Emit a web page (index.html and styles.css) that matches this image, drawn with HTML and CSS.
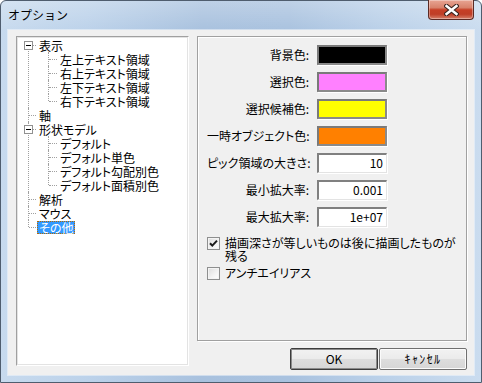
FILE: index.html
```html
<!DOCTYPE html>
<html lang="ja">
<head>
<meta charset="utf-8">
<title>オプション</title>
<link rel="stylesheet" href="styles.css">
</head>
<body>
<div class="window">
  <div class="titlebar">
    <span class="title">オプション</span>
    <div class="close">
      <svg width="15" height="12" viewBox="0 0 15 12"><path d="M2.5 2 L12.5 10 M12.5 2 L2.5 10" stroke="#3a2420" stroke-width="4.6" stroke-linecap="square" fill="none"/><path d="M2.5 2 L12.5 10 M12.5 2 L2.5 10" stroke="#fff" stroke-width="2.4" stroke-linecap="square" fill="none"/></svg>
    </div>
  </div>
  <div class="client">
    <div class="tree">
      <ul class="lvl0">
        <li><div class="node"><span class="exp"></span><span class="lbl">表示</span></div>
          <ul class="lvl1">
            <li><div class="node"><span class="lbl">左上テキスト領域</span></div></li>
            <li><div class="node"><span class="lbl">右上テキスト領域</span></div></li>
            <li><div class="node"><span class="lbl">左下テキスト領域</span></div></li>
            <li><div class="node"><span class="lbl">右下テキスト領域</span></div></li>
          </ul>
        </li>
        <li><div class="node"><span class="lbl">軸</span></div></li>
        <li><div class="node"><span class="exp"></span><span class="lbl">形状モデル</span></div>
          <ul class="lvl1">
            <li><div class="node"><span class="lbl">デフォルト</span></div></li>
            <li><div class="node"><span class="lbl">デフォルト単色</span></div></li>
            <li><div class="node"><span class="lbl">デフォルト勾配別色</span></div></li>
            <li><div class="node"><span class="lbl">デフォルト面積別色</span></div></li>
          </ul>
        </li>
        <li><div class="node"><span class="lbl">解析</span></div></li>
        <li><div class="node"><span class="lbl">マウス</span></div></li>
        <li><div class="node"><span class="lbl selected">その他</span></div></li>
      </ul>
    </div>
    <div class="right">
      <div class="panel">
        <div class="form">
          <span class="label">背景色:</span><span class="swatch black"></span>
          <span class="label">選択色:</span><span class="swatch pink"></span>
          <span class="label">選択候補色:</span><span class="swatch yellow"></span>
          <span class="label">一時オブジェクト色:</span><span class="swatch orange"></span>
          <span class="label">ピック領域の大きさ:</span><span class="field">10</span>
          <span class="label">最小拡大率:</span><span class="field">0.001</span>
          <span class="label">最大拡大率:</span><span class="field">1e+07</span>
        </div>
        <div class="check first">
          <span class="box"><svg width="11" height="11" viewBox="0 0 11 11"><path d="M2 5.2 L4.3 7.6 L9 2.6" stroke="#1c1c1c" stroke-width="2" fill="none"/></svg></span>
          <span class="ctext">描画深さが等しいものは後に描画したものが<br>残る</span>
        </div>
        <div class="check">
          <span class="box"></span>
          <span class="ctext">アンチエイリアス</span>
        </div>
      </div>
      <div class="buttons">
        <span class="btn default">OK</span>
        <span class="btn cancel">ｷｬﾝｾﾙ</span>
      </div>
    </div>
  </div>
</div>
</body>
</html>
```
FILE: styles.css
```css
html, body {
  margin: 0;
  padding: 0;
  background: #ffffff;
}
body {
  font-family: "Noto Sans CJK JP", "Liberation Sans", sans-serif;
  font-size: 12px;
  color: #000;
}
.window {
  box-sizing: border-box;
  width: 482px;
  height: 383px;
  border: 1px solid #4f5d6e;
  border-radius: 6px 6px 0 0;
  background:
    linear-gradient(to bottom, rgba(255,255,255,0.25), rgba(255,255,255,0) 30px),
    linear-gradient(to right, #c7daee 0%, #bcd2ea 18%, #a8c1de 42%, #a9c2df 60%, #bbd1e9 80%, #cadcef 100%);
  display: flex;
  flex-direction: column;
}
.titlebar {
  height: 29px;
  display: flex;
  justify-content: space-between;
  align-items: flex-start;
  padding: 0 7px 0 7px;
}
.title {
  margin-top: 6px;
  font-size: 12px;
  line-height: 16px;
  color: #000;
}
.close {
  box-sizing: border-box;
  width: 46px;
  height: 20px;
  margin-top: -1px;
  border: 1px solid #5b2a24;
  border-top: none;
  border-radius: 0 0 4px 4px;
  background: linear-gradient(to bottom, #e8a594 0%, #d8826c 40%, #c63f26 52%, #bf3e27 75%, #d6806a 100%);
  box-shadow: inset 0 0 0 1px rgba(255,255,255,0.35);
  display: flex;
  align-items: center;
  justify-content: center;
}
.close svg { display: block; margin-top: 1px; }
.client {
  flex: 1;
  margin: 0 7px 7px 7px;
  background: #f0f0f0;
  box-shadow: 0 0 0 1px rgba(255,255,255,0.45);
  display: flex;
  align-items: flex-start;
  padding: 6px 7px 0 8px;
  font-feature-settings: "palt";
}
.tree {
  box-sizing: border-box;
  width: 173px;
  height: 330px;
  background: #fff;
  border: 1px solid;
  border-color: #a0a0a0 #ffffff #ffffff #a0a0a0;
  box-shadow: inset 1px 1px 0 #e3e3e3, inset -1px -1px 0 #e3e3e3;
  padding: 1px 0 0 1px;
}
.tree ul {
  list-style: none;
  margin: 0;
  padding: 0;
}
.tree li { position: relative; }
.node {
  position: relative;
  height: 14px;
  line-height: 14px;
  white-space: nowrap;
  padding-left: 19px;
}
.lvl1 .node { padding-left: 40px; }
.lbl {
  display: inline-block;
  box-sizing: border-box;
  height: 13px;
  line-height: 13px;
  padding: 0 1px;
  border: 1px solid transparent;
  border-width: 0 1px;
  vertical-align: top;
  margin-top: 1px;
}
.lbl.selected {
  background: #3399ff;
  color: #fff;
  border: 1px dotted #b86a00;
  line-height: 11px;
}
/* tree connector lines */
.lvl0 > li::after {
  content: "";
  position: absolute;
  left: 10px;
  top: 0;
  bottom: 0;
  border-left: 1px dotted #a0a0a0;
}
.lvl0 > li:first-child::after { top: 7px; }
.lvl0 > li:last-child::after { bottom: auto; height: 7px; }
.lvl0 > li > .node::before {
  content: "";
  position: absolute;
  left: 11px;
  top: 7px;
  width: 7px;
  border-top: 1px dotted #a0a0a0;
}
.lvl1 > li::after {
  content: "";
  position: absolute;
  left: 30px;
  top: 0;
  bottom: 0;
  border-left: 1px dotted #a0a0a0;
}
.lvl1 > li:last-child::after { bottom: auto; height: 7px; }
.lvl1 > li > .node::before {
  content: "";
  position: absolute;
  left: 31px;
  top: 7px;
  width: 8px;
  border-top: 1px dotted #a0a0a0;
}
.exp {
  position: absolute;
  z-index: 1;
  left: 6px;
  top: 3px;
  box-sizing: border-box;
  width: 9px;
  height: 9px;
  border: 1px solid #919191;
  background: #fff;
}
.exp::before {
  content: "";
  position: absolute;
  left: 1px;
  top: 3px;
  width: 5px;
  height: 1px;
  background: #000;
}
.right {
  margin-left: 8px;
  width: 270px;
  display: flex;
  flex-direction: column;
}
.panel {
  box-sizing: border-box;
  width: 270px;
  height: 305px;
  border: 1px solid #a0a0a0;
  box-shadow: inset 1px 1px 0 #fff, 1px 1px 0 #fff;
  padding: 8px 0 0 9px;
}
.form {
  display: grid;
  grid-template-columns: 102px 70px;
  grid-auto-rows: 20px;
  column-gap: 8px;
  row-gap: 7px;
  align-items: center;
}
.label {
  text-align: right;
  white-space: nowrap;
  line-height: 14px;
}
.swatch, .field {
  box-sizing: border-box;
  height: 20px;
  width: 70px;
  border: 2px solid #7e7e7e;
  border-color: #7a7a7a #8a8a8a #8a8a8a #7a7a7a;
  box-shadow: 1px 1px 0 #fff;
}
.black { background: #000; }
.pink { background: #ff80ff; }
.yellow { background: #ffff00; }
.orange { background: #ff8000; }
.field {
  background: #fff;
  border-color: #808080 #e3e3e3 #e3e3e3 #808080;
  border-width: 2px 1px 1px 2px;
  text-align: right;
  padding-right: 3px;
  line-height: 16px;
  font-feature-settings: normal;
}
.check {
  display: flex;
  align-items: flex-start;
  gap: 5px;
  margin-top: 4px;
}
.check.first { margin-top: 9px; }
.box {
  box-sizing: border-box;
  width: 13px;
  height: 13px;
  flex: none;
  border: 1px solid #8e8f8f;
  background: linear-gradient(135deg, #dcdcdc 0%, #f4f4f4 60%, #ffffff 100%);
  box-shadow: inset 0 0 0 1px #f4f4f4;
  margin-top: 1px;
  display: flex;
  align-items: center;
  justify-content: center;
}
.box svg { display: block; }
.ctext {
  line-height: 13px;
  padding-top: 0;
}
.buttons {
  display: flex;
  justify-content: flex-end;
  gap: 1px;
  margin-top: 7px;
}
.btn {
  box-sizing: border-box;
  width: 88px;
  height: 22px;
  border: 1px solid #707070;
  border-radius: 2px;
  background: linear-gradient(to bottom, #f2f2f2 0%, #ebebeb 48%, #dddddd 52%, #d6d6d6 100%);
  box-shadow: inset 0 0 0 1px #fbfbfb;
  text-align: center;
  line-height: 19px;
  font-feature-settings: normal;
}
.btn.cancel { letter-spacing: 1.4px; }
.btn.default {
  border-color: #3c3c3c;
  box-shadow: inset 0 0 0 1px #8a8a8a;
}
```
